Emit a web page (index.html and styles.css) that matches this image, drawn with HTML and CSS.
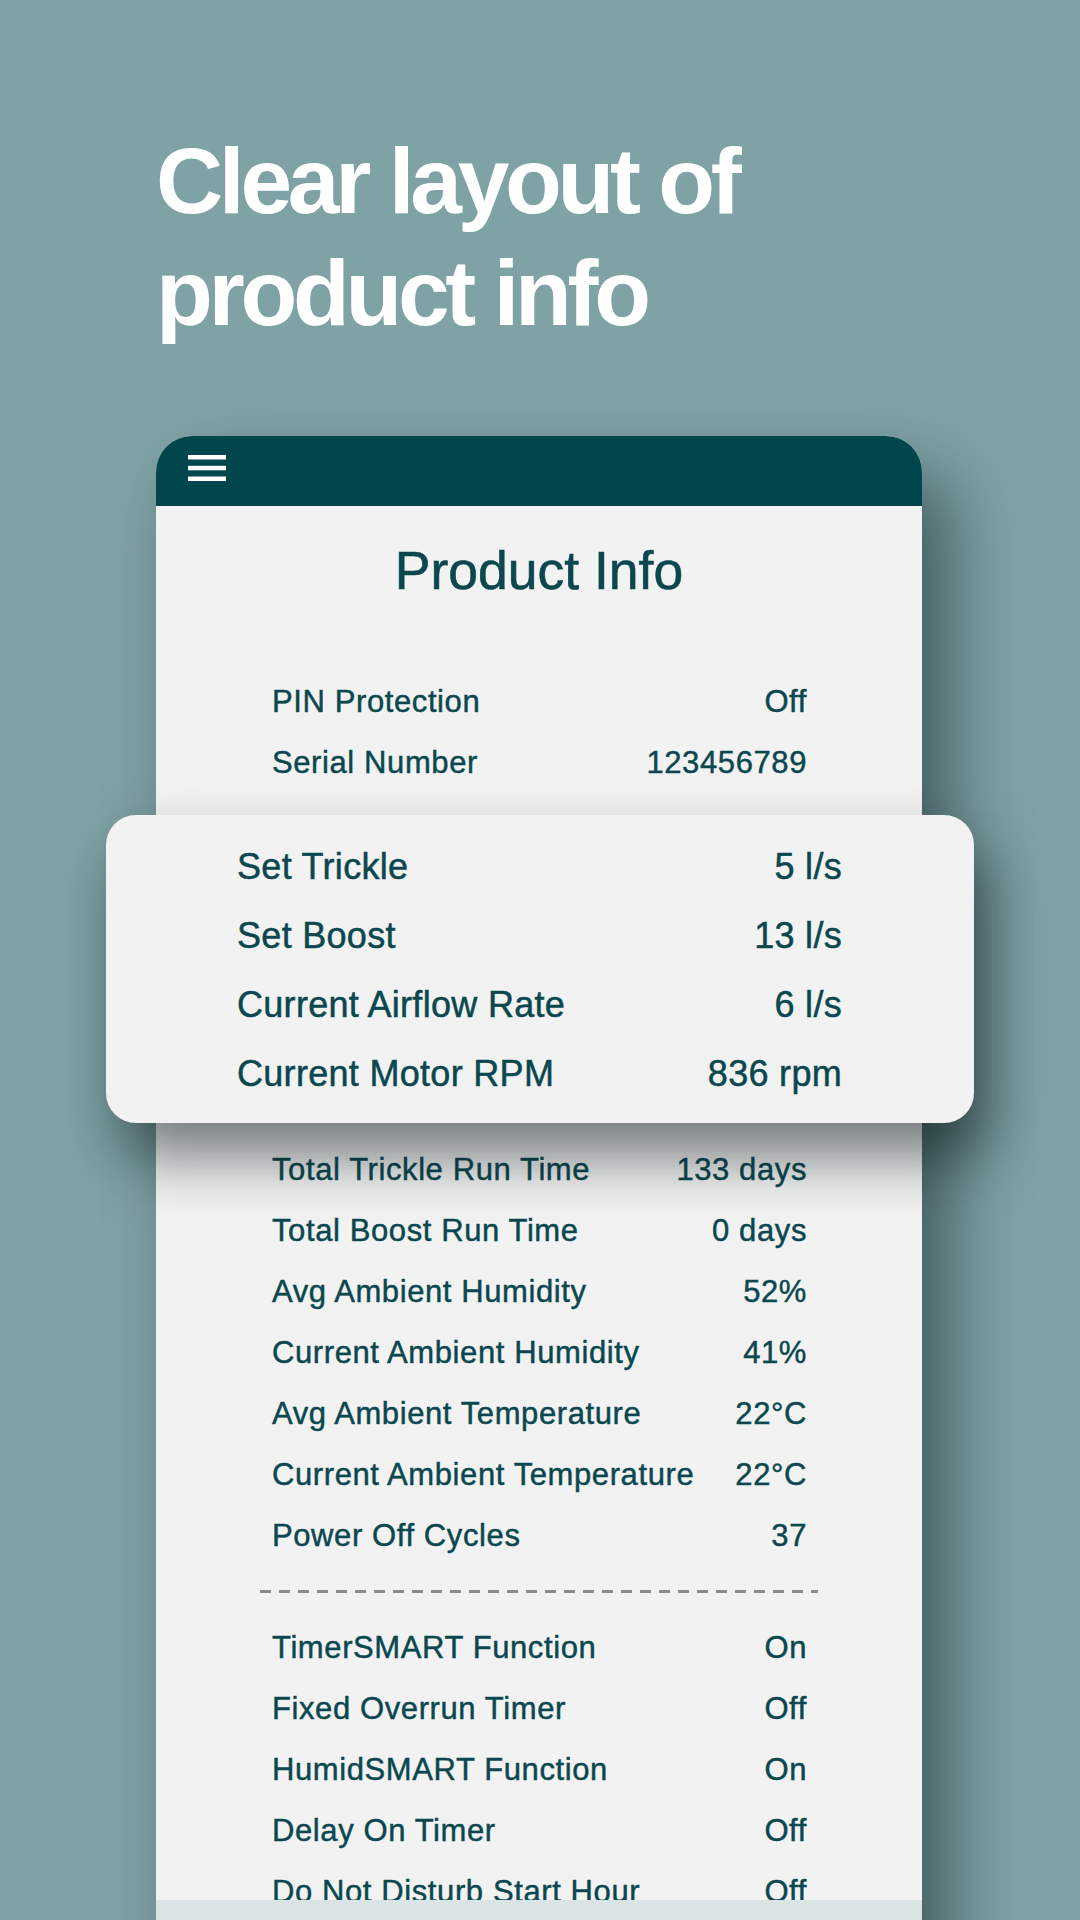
FILE: index.html
```html
<!DOCTYPE html>
<html lang="en">
<head>
<meta charset="utf-8">
<title>Product Info</title>
<link rel="stylesheet" href="styles.css">
</head>
<body>
<div class="page">
  <h1 class="headline">Clear layout of<br>product info</h1>

  <div class="phone">
    <div class="appbar">
      <svg class="menu" width="38" height="26" viewBox="0 0 38 26" aria-hidden="true">
        <rect x="0" y="0" width="38" height="4.5" fill="#ffffff"/>
        <rect x="0" y="10.8" width="38" height="4.5" fill="#ffffff"/>
        <rect x="0" y="21.5" width="38" height="4.5" fill="#ffffff"/>
      </svg>
    </div>
    <h2 class="title">Product Info</h2>
    <div class="list">
      <div class="group">
        <div class="row"><span>PIN Protection</span><span>Off</span></div>
        <div class="row"><span>Serial Number</span><span>123456789</span></div>
      </div>
      <div class="covered" aria-hidden="true"></div>
      <div class="group">
        <div class="row"><span>Total Trickle Run Time</span><span>133 days</span></div>
        <div class="row"><span>Total Boost Run Time</span><span>0 days</span></div>
        <div class="row"><span>Avg Ambient Humidity</span><span>52%</span></div>
        <div class="row"><span>Current Ambient Humidity</span><span>41%</span></div>
        <div class="row"><span>Avg Ambient Temperature</span><span>22°C</span></div>
        <div class="row"><span>Current Ambient Temperature</span><span>22°C</span></div>
        <div class="row"><span>Power Off Cycles</span><span>37</span></div>
      </div>
      <div class="divider"></div>
      <div class="group group-after-divider">
        <div class="row"><span>TimerSMART Function</span><span>On</span></div>
        <div class="row"><span>Fixed Overrun Timer</span><span>Off</span></div>
        <div class="row"><span>HumidSMART Function</span><span>On</span></div>
        <div class="row"><span>Delay On Timer</span><span>Off</span></div>
        <div class="row"><span>Do Not Disturb Start Hour</span><span>Off</span></div>
      </div>
    </div>
    <div class="navbar"></div>
  </div>

  <div class="popup">
    <div class="prow"><span>Set Trickle</span><span>5 l/s</span></div>
    <div class="prow"><span>Set Boost</span><span>13 l/s</span></div>
    <div class="prow"><span>Current Airflow Rate</span><span>6 l/s</span></div>
    <div class="prow"><span>Current Motor RPM</span><span>836 rpm</span></div>
  </div>
</div>
</body>
</html>
```

FILE: styles.css
```css
html, body {
  margin: 0;
  padding: 0;
}

body {
  width: 1080px;
  height: 1920px;
  overflow: hidden;
  background: #7fa2a5;
  font-family: "Liberation Sans", Arial, Helvetica, sans-serif;
}

.page {
  position: relative;
  box-sizing: border-box;
  height: 1920px;
  padding: 125px 0 0 156px;
}

.headline {
  margin: 0;
  color: #ffffff;
  font-weight: 700;
  font-size: 93px;
  line-height: 112px;
  letter-spacing: -4.3px;
}

.phone {
  position: relative;
  width: 766px;
  height: 1600px;
  margin-top: 87px;
  background: #f2f2f2;
  border-radius: 36px 36px 0 0;
  overflow: hidden;
  box-shadow: 28px 40px 70px rgba(18, 34, 36, 0.55);
  color: #0a474f;
}

.appbar {
  box-sizing: border-box;
  height: 70px;
  background: #01454d;
  padding: 19px 0 0 32px;
}

.menu {
  display: block;
}

.title {
  margin: 33px 0 0;
  text-align: center;
  font-weight: 400;
  font-size: 53.5px;
  line-height: 64px;
  color: #0a474f;
  -webkit-text-stroke: 0.6px #0a474f;
}

.list {
  margin-top: 68px;
  padding: 0 115px 0 116px;
}

.covered {
  height: 346px;
}

.row {
  display: flex;
  justify-content: space-between;
  height: 61px;
  line-height: 61px;
  font-size: 31px;
  letter-spacing: 0.6px;
  white-space: nowrap;
  -webkit-text-stroke: 0.45px #0a474f;
}

.divider {
  height: 3px;
  margin: 24px -11px 0 -12px;
  background: repeating-linear-gradient(to right, #8b8b8b 0 11px, transparent 11px 19px);
}

.group-after-divider {
  margin-top: 24px;
}

.navbar {
  position: absolute;
  left: 0;
  right: 0;
  top: 1464px;
  height: 136px;
  background: #dbe4e5;
}

.popup {
  position: absolute;
  left: 106px;
  top: 815px;
  width: 868px;
  box-sizing: border-box;
  padding: 17px 132px 15px 131px;
  background: #f2f2f2;
  border-radius: 30px;
  box-shadow: 14px 34px 60px rgba(10, 22, 24, 0.55);
  color: #0a474f;
}

.prow {
  display: flex;
  justify-content: space-between;
  height: 69px;
  line-height: 69px;
  font-size: 36px;
  letter-spacing: 0.3px;
  white-space: nowrap;
  -webkit-text-stroke: 0.5px #0a474f;
}
```
